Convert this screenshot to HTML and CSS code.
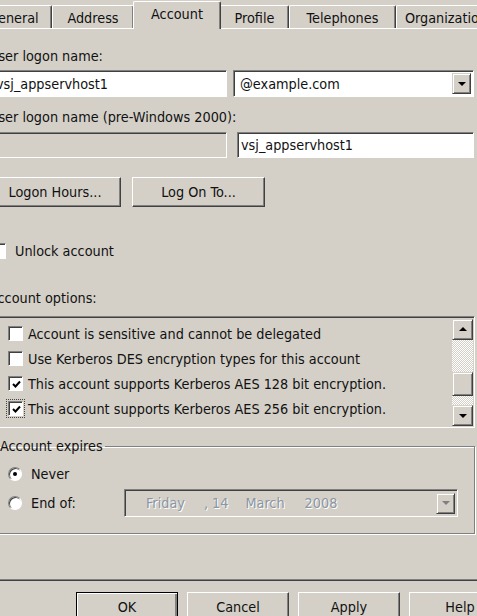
FILE: index.html
```html
<!DOCTYPE html>
<html lang="en">
<head>
  <meta charset="UTF-8">
  <meta name="viewport" content="width=device-width, initial-scale=1.0">
  <title>Account properties</title>
  <link rel="stylesheet" href="styles.css">
</head>
<body>
  <div class="dialog">

    <div class="tabs">
      <div class="tab tab-general">General</div>
      <div class="tab tab-address">Address</div>
      <div class="tab tab-account selected">Account</div>
      <div class="tab tab-profile">Profile</div>
      <div class="tab tab-phones">Telephones</div>
      <div class="tab tab-org">Organization</div>
    </div>

    <div class="panel">
      <div class="lbl lbl-first">User logon name:</div>
      <div class="row row-upn">
        <div class="field upn-name">vsj_appservhost1</div>
        <div class="field combo">
          <span>@example.com</span>
          <span class="drop"><span class="arrow"></span></span>
        </div>
      </div>

      <div class="lbl lbl-second">User logon name (pre-Windows 2000):</div>
      <div class="row row-sam">
        <div class="field disabled domain"></div>
        <div class="field sam-name">vsj_appservhost1</div>
      </div>

      <div class="row row-buttons">
        <div class="btn btn-hours">Logon Hours...</div>
        <div class="btn btn-logon">Log On To...</div>
      </div>

      <div class="check unlock">
        <span class="box"></span>
        <span>Unlock account</span>
      </div>

      <div class="lbl lbl-options">Account options:</div>
      <div class="listbox">
        <div class="items">
          <div class="check item">
            <span class="box"></span>
            <span>Account is sensitive and cannot be delegated</span>
          </div>
          <div class="check item">
            <span class="box"></span>
            <span>Use Kerberos DES encryption types for this account</span>
          </div>
          <div class="check item">
            <span class="box checked"><svg width="9" height="9" viewBox="0 0 9 9"><path d="M1 4 L3.5 6.5 L8 1.5" fill="none" stroke="#000" stroke-width="2"/></svg></span>
            <span>This account supports Kerberos AES 128 bit encryption.</span>
          </div>
          <div class="check item">
            <span class="focus"><span class="box checked"><svg width="9" height="9" viewBox="0 0 9 9"><path d="M1 4 L3.5 6.5 L8 1.5" fill="none" stroke="#000" stroke-width="2"/></svg></span></span>
            <span>This account supports Kerberos AES 256 bit encryption.</span>
          </div>
        </div>
        <div class="scrollbar">
          <div class="sbtn"><span class="arrow up"></span></div>
          <div class="track track-top"></div>
          <div class="thumb"></div>
          <div class="track track-bottom"></div>
          <div class="sbtn"><span class="arrow"></span></div>
        </div>
      </div>

      <fieldset class="group">
        <legend>Account expires</legend>
        <div class="radio-row">
          <span class="radio on"></span>
          <span>Never</span>
        </div>
        <div class="radio-row end-row">
          <span class="radio"></span>
          <span class="end-label">End of:</span>
          <div class="field disabled date">
            <span class="d-day">Friday</span>
            <span class="d-num">, 14</span>
            <span class="d-month">March</span>
            <span class="d-year">2008</span>
            <span class="drop dim"><span class="arrow"></span></span>
          </div>
        </div>
      </fieldset>
    </div>

    <div class="footer">
      <div class="btn default">OK</div>
      <div class="btn">Cancel</div>
      <div class="btn">Apply</div>
      <div class="btn">Help</div>
    </div>

  </div>
</body>
</html>
```

FILE: styles.css
```css
body{
  margin: 0px;
  background-color: #d4d0c8;
  font-family: "DejaVu Sans Condensed", "DejaVu Sans", sans-serif;
  font-size: 14.3px;
  color: #111;
  overflow: hidden;
}
.dialog{
  margin-left: -25px;
  width: 540px;
}

/* tabs */
.tabs{
  display: flex;
  height: 28px;
  padding-left: 12px;
  align-items: flex-end;
}
.tab{
  height: 23px;
  line-height: 24px;
  text-align: center;
  border-top: 1px solid #fff;
  border-left: 1px solid #fff;
  border-right: 1px solid #404040;
  box-shadow: inset -1px 0 #808080;
  border-radius: 2px 2px 0 0;
  box-sizing: border-box;
  white-space: nowrap;
  overflow: hidden;
}
.tab-general{
  width: 65px;
  text-align: right;
  padding-right: 16px;
}
.tab-address{ width: 82px; }
.tab-account{ width: 88px; }
.tab-profile{ width: 69px; }
.tab-phones{ width: 107px; }
.tab-org{ width: 100px; }
.tab.selected{
  height: 28px;
  line-height: 25px;
  margin: 0 -1px;
  position: relative;
  z-index: 2;
  background-color: #d4d0c8;
  margin-bottom: -1px;
}

.panel{
  border-top: 1px solid #fff;
  border-left: 1px solid #fff;
  border-right: 1px solid #404040;
  border-bottom: 1px solid #404040;
  box-shadow: inset -1px -1px #808080;
  padding: 18px 14px 46px 13px;
  width: 486px;
}

.lbl{
  height: 18px;
  line-height: 18px;
  white-space: nowrap;
}
.lbl-second{ margin-top: 11px; }
.lbl-options{ margin-top: 29px; }

.row{
  display: flex;
}
.row-upn{
  margin-top: 5px;
  gap: 6px;
}
.row-sam{
  margin-top: 6px;
  gap: 10px;
}
.row-buttons{
  margin-top: 19px;
  gap: 11px;
}

/* sunken fields */
.field{
  box-sizing: border-box;
  background-color: #fff;
  border: 1px solid;
  border-color: #808080 #fff #fff #808080;
  box-shadow: inset 1px 1px #404040;
  padding-left: 6px;
  display: flex;
  align-items: center;
  white-space: nowrap;
}
.field.disabled{
  background-color: #d4d0c8;
}
.upn-name{ width: 238px; height: 27px; }
.combo{
  width: 241px;
  height: 27px;
  justify-content: space-between;
  padding-right: 2px;
}
.domain{ width: 238px; height: 26px; }
.sam-name{ width: 237px; height: 26px; padding-left: 3px; }

.drop{
  width: 19px;
  height: 21px;
  box-sizing: border-box;
  background-color: #d4d0c8;
  border: 1px solid;
  border-color: #d4d0c8 #404040 #404040 #d4d0c8;
  box-shadow: inset 1px 1px #fff, inset -1px -1px #808080;
  display: flex;
  align-items: center;
  justify-content: center;
}
.arrow{
  width: 0;
  height: 0;
  border-left: 4px solid transparent;
  border-right: 4px solid transparent;
  border-top: 4px solid #000;
}
.arrow.up{
  border-top: 0;
  border-bottom: 4px solid #000;
}
.drop.dim .arrow{
  border-top-color: #808080;
}

/* raised buttons */
.btn{
  box-sizing: border-box;
  height: 30px;
  border: 1px solid;
  border-color: #fff #404040 #404040 #fff;
  box-shadow: inset -1px -1px #808080;
  display: flex;
  align-items: center;
  justify-content: center;
  white-space: nowrap;
}
.btn-hours{ width: 132px; }
.btn-logon{ width: 133px; }

/* checkboxes */
.check{
  display: flex;
  align-items: center;
  gap: 5px;
  height: 18px;
  white-space: nowrap;
}
.box{
  box-sizing: border-box;
  width: 15px;
  height: 15px;
  background-color: #fff;
  border: 1px solid;
  border-color: #808080 #fff #fff #808080;
  box-shadow: inset 1px 1px #404040;
  display: flex;
  align-items: center;
  justify-content: center;
}
.box svg{
  margin: 1px 0 0 1px;
}
.unlock{
  margin-top: 35px;
  gap: 9px;
}
.unlock .box{
  width: 16px;
  height: 16px;
  margin-left: 1px;
}
.focus{
  display: flex;
  outline: 1px dotted #444;
  outline-offset: 1px;
}

.listbox{
  margin-top: 9px;
  height: 112px;
  box-sizing: border-box;
  border: 1px solid;
  border-color: #808080 #fff #fff #808080;
  box-shadow: inset 1px 1px #404040;
  padding: 2px 1px 1px 2px;
  display: flex;
}
.items{
  flex: 1;
  padding: 2px 0 0 16px;
}
.item{
  height: 25px;
}
.scrollbar{
  width: 21px;
  display: flex;
  flex-direction: column;
}
.sbtn, .thumb{
  box-sizing: border-box;
  height: 21px;
  background-color: #d4d0c8;
  border: 1px solid;
  border-color: #d4d0c8 #404040 #404040 #d4d0c8;
  box-shadow: inset 1px 1px #fff, inset -1px -1px #808080;
  display: flex;
  align-items: center;
  justify-content: center;
}
.thumb{ height: 24px; }
.track{
  background-color: #e8e6e1;
  background-image: repeating-conic-gradient(#d4d0c8 0 25%, #fff 0 50%);
  background-size: 2px 2px;
}
.track-top{ height: 33px; }
.track-bottom{ height: 9px; }

/* group box */
.group{
  margin: 9px 0 0 0;
  padding: 0 0 15px 0;
  border: 1px solid #808080;
  box-shadow: inset 1px 1px #fff, 1px 1px #fff;
  height: 97px;
  box-sizing: border-box;
}
.group legend{
  padding: 0 2px 0 0;
  margin-left: 10px;
  line-height: 18px;
}
.radio-row{
  display: flex;
  align-items: center;
  height: 18px;
  margin-top: 10px;
  padding-left: 18px;
}
.radio{
  box-sizing: border-box;
  width: 14px;
  height: 14px;
  border-radius: 50%;
  background-color: #fff;
  border: 1px solid;
  border-color: #808080 #fff #fff #808080;
  box-shadow: inset 1px 1px #404040;
  margin-right: 9px;
  display: flex;
  align-items: center;
  justify-content: center;
}
.radio.on::after{
  content: "";
  width: 4px;
  height: 4px;
  border-radius: 50%;
  background-color: #000;
}
.end-row{
  height: 28px;
  margin-top: 6px;
}
.end-label{
  width: 93px;
}
.date{
  width: 334px;
  height: 28px;
  padding: 0 2px 0 0;
  color: #8b96a3;
  text-shadow: 1px 1px #fff;
}
.d-day{ margin-left: 21px; }
.d-num{ margin-left: 19px; }
.d-month{ margin-left: 17px; }
.d-year{ margin-left: 20px; flex: 1; }

/* bottom buttons */
.footer{
  display: flex;
  gap: 9px;
  padding: 11px 0 0 101px;
}
.footer .btn{
  width: 102px;
}
.btn.default{
  border: 1px solid #000;
  box-shadow: inset 1px 1px #fff, inset -2px -2px #808080, inset -1px -1px #404040;
}
```
